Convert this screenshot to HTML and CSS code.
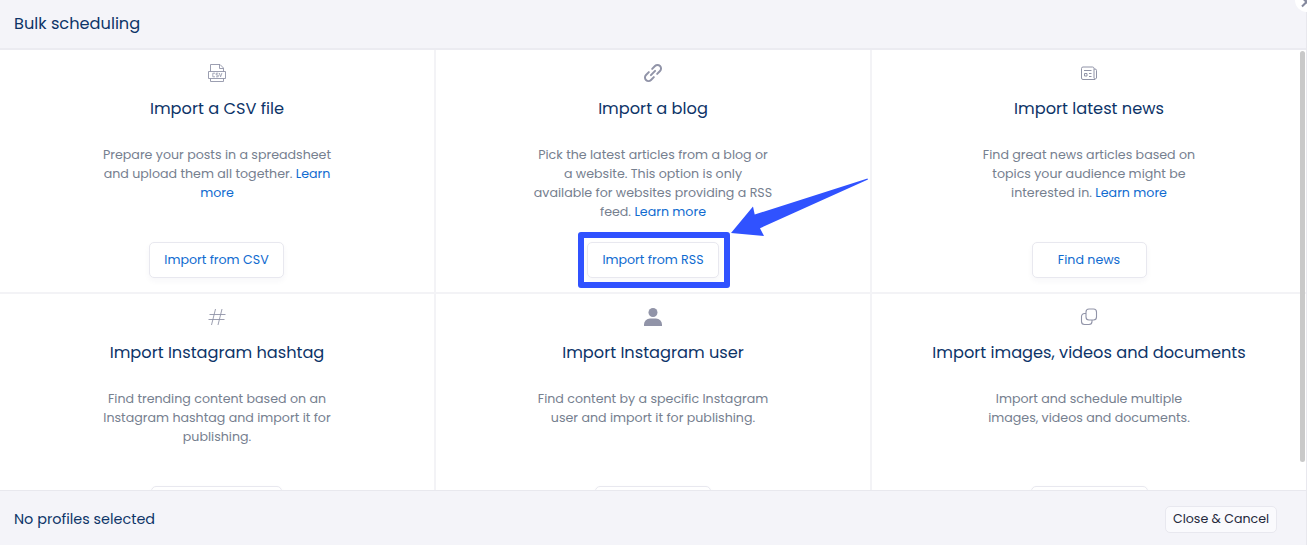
FILE: index.html
```
<!DOCTYPE html>
<html lang="en">
<head>
    <meta charset="UTF-8">
    <meta name="viewport" content="width=device-width, initial-scale=1.0">
    <title>Bulk scheduling</title>
    <link rel="stylesheet" href="styles.css">
</head>
<body>
    <div class="modal">
        <header class="modal-header">
            <h1>Bulk scheduling</h1>
            <button class="close-button" aria-label="Close">
                <svg width="24" height="24" viewBox="0 0 24 24"><path d="M7 6.500l9 9M16 6.500l-9 9"/></svg>
            </button>
        </header>

        <main class="modal-body">
            <div class="options">
                <section class="card">
                    <svg class="icon csv-icon" viewBox="0 0 20 20">
                        <path d="M3.500 8.500V1.500h9.500l3.500 3.500v3.500M12.500 1.500v4h4M1.500 8.500h17v7h-17zM3.500 15.500v3h13v-3"/>
                        <path class="fine" d="M8 10.200H5.800v3.600H8M11.300 10.200H9.200V12h2v1.800H9M12.300 10l1.300 3.800L14.900 10"/>
                    </svg>
                    <h2>Import a CSV file</h2>
                    <p>Prepare your posts in a spreadsheet<br>and upload them all together. <a href="#">Learn<br>more</a></p>
                    <button class="action w-csv">Import from CSV</button>
                </section>

                <section class="card">
                    <svg class="icon link-icon" viewBox="0 0 24 24">
                        <path d="M9.500 14.500l5-5M11 7l3.400-3.400a4.240 4.240 0 0 1 6 6L17 13M13 17l-3.400 3.400a4.240 4.240 0 0 1-6-6L7 11"/>
                    </svg>
                    <h2>Import a blog</h2>
                    <p>Pick the latest articles from a blog or<br>a website. This option is only<br>available for websites providing a RSS<br>feed. <a href="#">Learn more</a></p>
                    <button class="action w-rss highlighted">Import from RSS</button>
                    <svg class="arrow" width="138" height="60" viewBox="0 0 138 60">
                        <path d="M1 55L23 28.500 24.700 36.500 137.500 0.500 138 1.500 30 50.200 34 58z"/>
                    </svg>
                </section>

                <section class="card">
                    <svg class="icon news-icon" viewBox="0 0 20 20">
                        <path d="M16 16.500H4a1.500 1.500 0 0 1-1.500-1.500V5.500A1.500 1.500 0 0 1 4 4h9.500A1.500 1.500 0 0 1 15 5.500V15a1.300 1.300 0 0 0 2.500 0V7.500A1.500 1.500 0 0 0 16 6h-1M5 7.500h7.500M10 10.500h2.500M10 13.500h2.500M5.500 10.500h2.500v2.500H5.500z"/>
                    </svg>
                    <h2>Import latest news</h2>
                    <p>Find great news articles based on<br>topics your audience might be<br>interested in. <a href="#">Learn more</a></p>
                    <button class="action w-news">Find news</button>
                </section>

                <section class="card">
                    <svg class="icon hashtag-icon" viewBox="0 0 20 20">
                        <path d="M8.500 2L4.500 18M15 2l-4 16M2.500 7.500h16M1.500 12.500h16"/>
                    </svg>
                    <h2>Import Instagram hashtag</h2>
                    <p>Find trending content based on an<br>Instagram hashtag and import it for<br>publishing.</p>
                    <button class="action w-hashtag"></button>
                </section>

                <section class="card">
                    <svg class="icon user-icon" viewBox="0 0 20 20">
                        <circle cx="10" cy="5.500" r="4.500"/>
                        <path d="M1 19v-1.500a6 6 0 0 1 6-6h6a6 6 0 0 1 6 6V19z"/>
                    </svg>
                    <h2>Import Instagram user</h2>
                    <p>Find content by a specific Instagram<br>user and import it for publishing.</p>
                    <button class="action w-user"></button>
                </section>

                <section class="card">
                    <svg class="icon" viewBox="0 0 20 20">
                        <rect x="7" y="2" width="10.500" height="11" rx="3"/>
                        <path d="M7 6.500H5.500a3 3 0 0 0-3 3v5a3 3 0 0 0 3 3H10a3 3 0 0 0 3-3V13"/>
                    </svg>
                    <h2>Import images, videos and documents</h2>
                    <p>Import and schedule multiple<br>images, videos and documents.</p>
                    <button class="action w-media"></button>
                </section>
            </div>
            <div class="scrollbar"></div>
        </main>

        <footer class="modal-footer">
            <span>No profiles selected</span>
            <button class="cancel-button">Close &amp; Cancel</button>
        </footer>
    </div>
</body>
</html>
```
FILE: styles.css
```
* {
    margin: 0;
    padding: 0;
    box-sizing: border-box;
}

:root {
    --navy: #0d3468;
    --link: #106bd0;
    --muted: #76808f;
    --icon: #9194a8;
    --line: #f3f3f6;
    --panel: #f4f4f9;
    --accent: #3052ff;
}

body {
    font-family: Poppins, Inter, "Open Sans", sans-serif;
    background: #fff;
    overflow: hidden;
}

button {
    font: inherit;
}

.modal {
    display: flex;
    flex-direction: column;
    width: 1307px;
    height: 545px;
    border-right: 1px solid #e8e8ee;
}

.modal-header {
    position: relative;
    flex: none;
    height: 50px;
    padding: 12px 14px 0;
    background: var(--panel);
    border-bottom: 2px solid #ebebf1;
}

.modal-header h1 {
    font-size: 16.200px;
    font-weight: 400;
    line-height: 24px;
    color: var(--navy);
}

.close-button {
    position: absolute;
    top: -12px;
    right: -13px;
    width: 24px;
    height: 24px;
    border: none;
    border-radius: 50%;
    background: #fff;
}

.close-button svg {
    display: block;
    margin-top: 3px;
    fill: none;
    stroke: #85899d;
    stroke-width: 2;
}

.modal-body {
    position: relative;
    height: 440px;
    overflow: hidden;
}

.options {
    display: grid;
    grid-template-columns: 436px 436px 434px;
    grid-auto-rows: 244px;
}

.card {
    position: relative;
    display: flex;
    flex-direction: column;
    align-items: center;
    padding: 13px 0 14px;
    text-align: center;
    border-right: 2px solid var(--line);
    border-bottom: 2px solid var(--line);
}

.card:nth-child(3n) {
    border-right: none;
}

.icon {
    flex: none;
    width: 20px;
    height: 20px;
    fill: none;
    stroke: var(--icon);
    stroke-width: 1.1;
}

.csv-icon {
    stroke-width: 0.9;
}

.csv-icon .fine {
    stroke-width: 0.8;
}

.news-icon {
    stroke-width: 1;
}

.hashtag-icon {
    stroke-width: 0.9;
}

.link-icon {
    stroke-width: 2.400;
    stroke-linecap: round;
}

.user-icon {
    fill: var(--icon);
    stroke: none;
}

.card h2 {
    margin-top: 14px;
    font-size: 16.200px;
    font-weight: 400;
    line-height: 24px;
    white-space: nowrap;
    color: var(--navy);
}

.card p {
    margin-top: 24px;
    font-size: 12.640px;
    line-height: 19px;
    white-space: nowrap;
    color: var(--muted);
}

.card a {
    color: var(--link);
    text-decoration: none;
}

.action {
    position: relative;
    height: 36px;
    margin-top: auto;
    font-size: 12.640px;
    white-space: nowrap;
    color: var(--link);
    background: #fff;
    border: 1px solid #e8e8ef;
    border-radius: 5px;
    box-shadow: 0 3px 6px rgba(40, 50, 90, 0.04);
}

.w-csv {
    width: 135px;
    margin-right: 1px;
}

.w-rss { width: 132px; }
.w-news { width: 115px; }

.w-hashtag {
    width: 131px;
    margin-right: 1px;
}

.w-user { width: 116px; }
.w-media { width: 117px; }

.highlighted::after {
    content: '';
    position: absolute;
    inset: -11px -12px -11px -10px;
    border: 6px solid var(--accent);
    border-radius: 3px;
}

.arrow {
    position: absolute;
    top: 128px;
    left: 294px;
    fill: var(--accent);
}

.scrollbar {
    position: absolute;
    top: 1px;
    right: 1px;
    width: 5px;
    height: 411px;
    border-radius: 3px;
    background: #c9c9c9;
}

.modal-footer {
    display: flex;
    flex: none;
    justify-content: space-between;
    height: 55px;
    padding: 15px 29px 0 14px;
    background: var(--panel);
    border-top: 1px solid #e8e8ee;
}

.modal-footer span {
    font-size: 14.400px;
    line-height: 26px;
    color: var(--navy);
}

.cancel-button {
    width: 112px;
    height: 27px;
    padding-bottom: 1px;
    font-size: 12.600px;
    white-space: nowrap;
    color: #25283c;
    background: #fafafd;
    border: 1px solid #e8e8ef;
    border-radius: 5px;
}
```
